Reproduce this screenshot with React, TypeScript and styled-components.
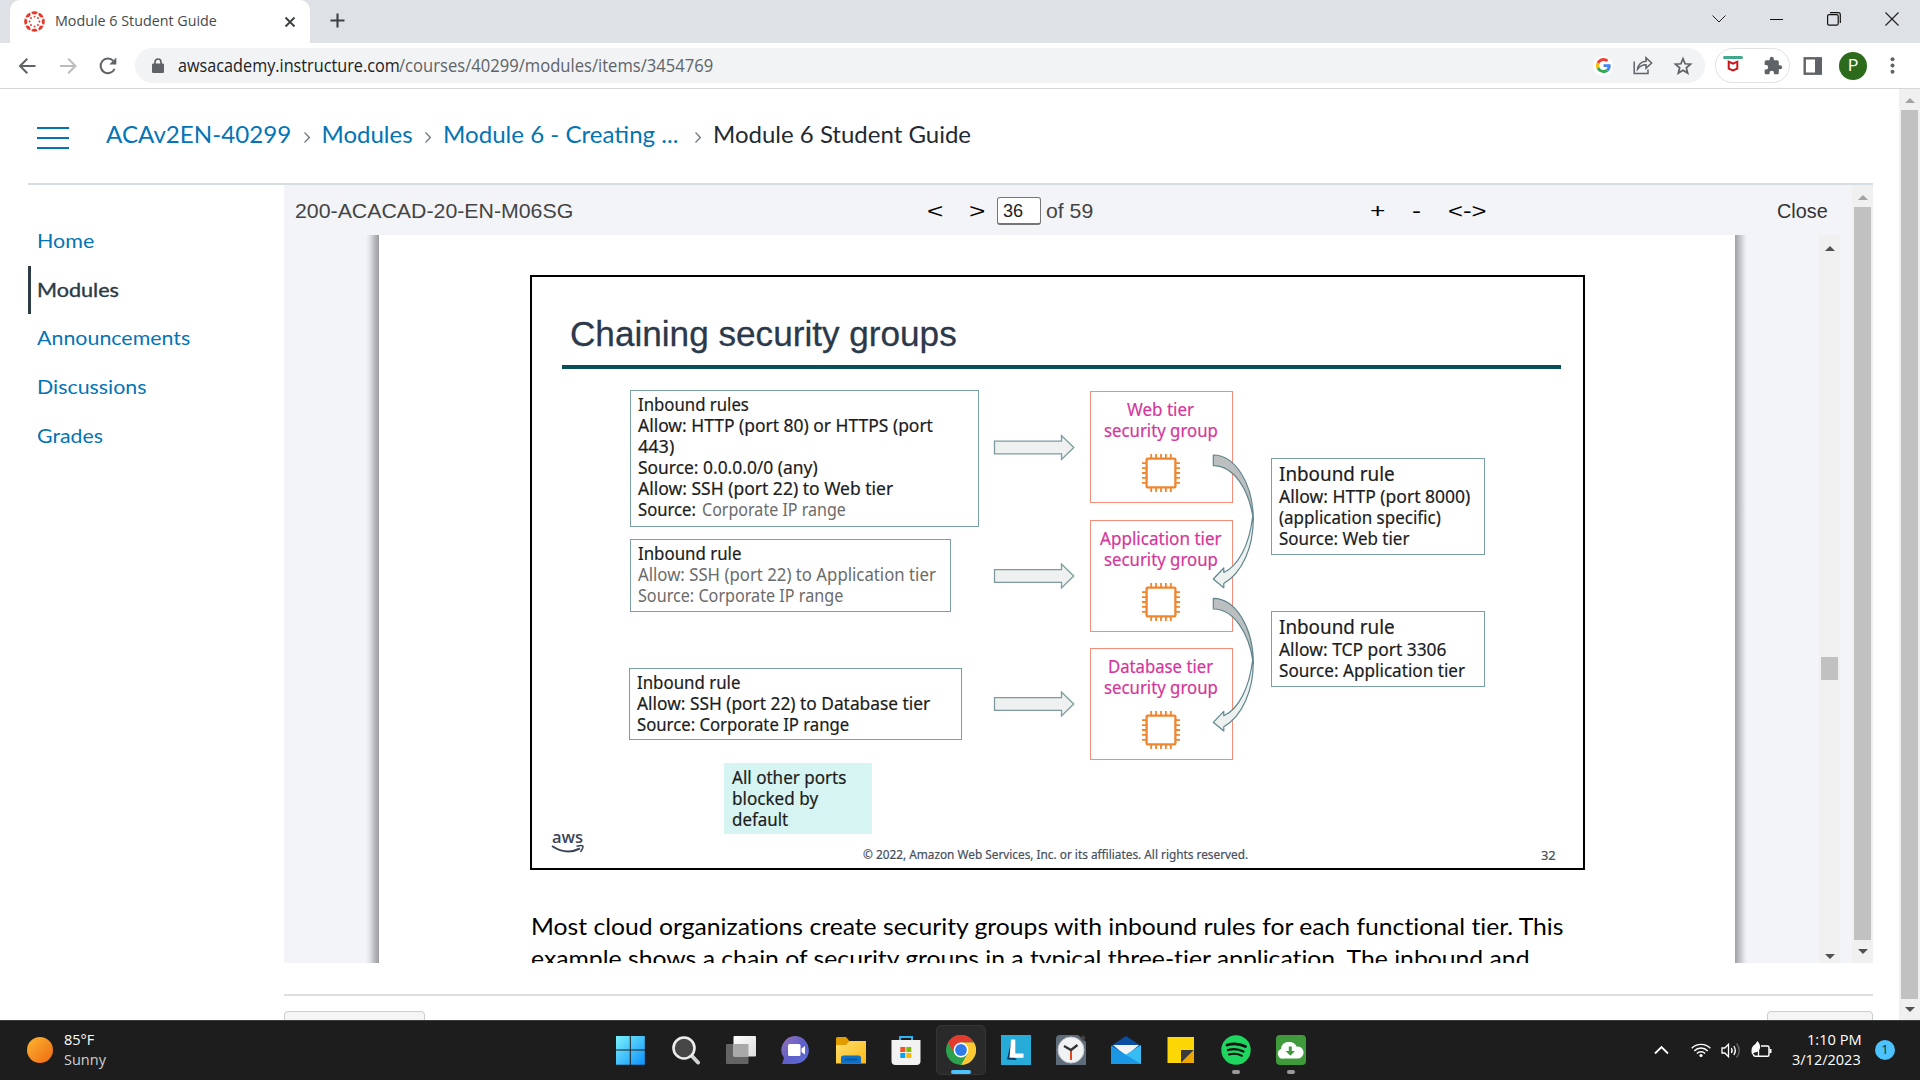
import React, { useLayoutEffect, useRef, useState } from "react";
import styled, { createGlobalStyle } from "styled-components";

const Global = createGlobalStyle`
  * { box-sizing: border-box; }
  html, body { margin: 0; padding: 0; overflow: hidden; background: #fff; }
`;

const ui = `"Open Sans", "Noto Sans", sans-serif`;
const lato = `Lato, "Open Sans", sans-serif`;
const arial = `"Liberation Sans", Arial, sans-serif`;

/* ---------- text fitted to a measured width ---------- */

const FitBox = styled.span<{ $w: number }>`
  display: block;
  flex: none;
  width: ${(p) => p.$w}px;
  white-space: pre;
`;
const FitInner = styled.span`
  display: inline-block;
  transform-origin: 0 50%;
`;

function Fit({ w, children }: { w: number; children: React.ReactNode }) {
  const ref = useRef<HTMLSpanElement>(null);
  const [scale, setScale] = useState(1);
  useLayoutEffect(() => {
    if (ref.current) setScale(w / ref.current.offsetWidth);
  }, [w]);
  return (
    <FitBox $w={w}>
      <FitInner ref={ref} style={{ transform: `scaleX(${scale})` }}>
        {children}
      </FitInner>
    </FitBox>
  );
}

/* ---------- browser frame ---------- */

const Screen = styled.div`
  width: 1920px;
  height: 1080px;
  display: flex;
  flex-direction: column;
  overflow: hidden;
  background: #fff;
  font-family: ${ui};
`;
const TabStrip = styled.div`
  height: 43px;
  flex: none;
  display: flex;
  background: #dee1e6;
  padding-left: 10px;
`;
const Tab = styled.div`
  width: 300px;
  height: 43px;
  padding: 0 14px;
  display: flex;
  align-items: center;
  background: #fff;
  border-radius: 10px 10px 0 0;
  color: #45494d;
  font-size: 15px;
  line-height: 40px;
`;
const TabTitle = styled.div`
  margin-left: 10px;
  flex: 1;
  height: 40px;
  margin-top: -3px;
`;
const NewTab = styled.div`
  display: flex;
  align-items: center;
  padding-left: 20px;
  padding-bottom: 1px;
  flex: 1;
`;
const WindowButtons = styled.div`
  display: flex;
  align-items: center;
  height: 37px;
  gap: 44px;
  padding-right: 21px;
`;
const Toolbar = styled.div`
  height: 46px;
  flex: none;
  display: flex;
  align-items: center;
  border-bottom: 1px solid #d5d7da;
  padding-left: 17px;
`;
const NavButtons = styled.div`
  display: flex;
  align-items: center;
  gap: 20px;
  width: 118px;
`;
const Omnibox = styled.div`
  width: 1570px;
  height: 35px;
  border-radius: 18px;
  background: #f1f3f4;
  display: flex;
  align-items: center;
  padding: 0 12px 0 17px;
  font-size: 17.5px;
  line-height: 33px;
  color: #5f6368;
`;
const Host = styled.div`
  margin-left: 13.5px;
  color: #202124;
`;
const OmniActions = styled.div`
  margin-left: auto;
  display: flex;
  align-items: center;
  gap: 20px;
`;
const GoogleDisc = styled.div`
  width: 20px;
  height: 20px;
  border-radius: 50%;
  background: #fff;
  display: flex;
  align-items: center;
  justify-content: center;
`;
const Extensions = styled.div`
  width: 75px;
  height: 35px;
  margin-left: 10px;
  border: 1px solid #dfe1e3;
  border-radius: 18px;
  display: flex;
  align-items: center;
  justify-content: space-between;
  padding: 0 6px 0 7px;
`;
const ToolIcon = styled.div<{ $ml: number }>`
  display: flex;
  margin-left: ${(p) => p.$ml}px;
`;
const Avatar = styled.div`
  width: 28px;
  height: 28px;
  margin-left: 17px;
  border-radius: 50%;
  background: #2c6a1c;
  color: #fff;
  font: 16px/28px Roboto, sans-serif;
  text-align: center;
`;

/* ---------- page ---------- */

const Page = styled.div`
  height: 931px;
  flex: none;
  display: flex;
`;
const PageBody = styled.div`
  width: 1899px;
  padding: 0 26px 0 28px;
  display: flex;
  flex-direction: column;
`;
const PageHead = styled.div`
  height: 96px;
  flex: none;
  display: flex;
  align-items: center;
  border-bottom: 2px solid #d7dde1;
  padding: 0 0 5px 9px;
  font-family: ${lato};
  font-size: 24px;
  line-height: 36px;
  color: #0374b5;
`;
const Burger = styled.div`
  width: 32px;
  height: 22px;
  margin-right: 37px;
  margin-top: 8px;
  display: flex;
  flex-direction: column;
  justify-content: space-between;
`;
const BurgerLine = styled.span`
  height: 2px;
  background: #0374b5;
`;
const Current = styled.div`
  color: #1f2a33;
`;
const CrumbSep = styled.div<{ $l: number; $r: number }>`
  display: flex;
  margin: 7px ${(p) => p.$r}px 0 ${(p) => p.$l}px;
`;
const Columns = styled.div`
  display: flex;
  flex: 1;
  min-height: 0;
`;
const SideNav = styled.nav`
  width: 256px;
  padding-top: 32px;
  font-family: ${lato};
  font-size: 20px;
  line-height: 47px;
`;
const NavItem = styled.div<{ $active?: boolean }>`
  height: 48.7px;
  padding-left: 5.5px;
  border-left: 3px solid ${(p) => (p.$active ? "#2d3b45" : "transparent")};
  color: ${(p) => (p.$active ? "#2d3b45" : "#0374b5")};
  -webkit-text-stroke: ${(p) => (p.$active ? "0.4px #2d3b45" : "0")};
`;
const Content = styled.div`
  flex: 1;
  display: flex;
  flex-direction: column;
`;
const Viewer = styled.div`
  height: 778px;
  flex: none;
  display: flex;
  background: #f2f4f8;
`;
const ViewerMain = styled.div`
  width: 1568px;
  display: flex;
  flex-direction: column;
`;
const ViewerBar = styled.div`
  height: 50px;
  flex: none;
  display: flex;
  align-items: center;
  padding: 2px 0 0 10.5px;
  font: 21px/48px ${arial};
  color: #444;
`;
const Gap = styled.span<{ $w: number }>`
  width: ${(p) => p.$w}px;
  flex: none;
`;
const Glyph = styled.div<{ $soft?: boolean }>`
  color: ${(p) => (p.$soft ? "#333" : "#000")};
`;
const PageInput = styled.div`
  width: 44px;
  height: 28px;
  padding-left: 5px;
  border: 1px solid #767676;
  border-bottom-width: 2px;
  border-radius: 3px;
  background: #fff;
  color: #222;
  font-size: 19px;
  line-height: 26px;
`;
const DocArea = styled.div`
  flex: 1;
  min-height: 0;
  display: flex;
  overflow: hidden;
`;
const Edge = styled.div<{ $left?: boolean }>`
  width: ${(p) => (p.$left ? 95 : 84)}px;
  flex: none;
  background: ${(p) =>
    p.$left
      ? "linear-gradient(to left, #9b9ca0 0, #b5b6ba 4px, #dfe1e5 9px, #f2f4f8 13px)"
      : "linear-gradient(to right, #a0a1a6 0, #bcbdc2 4px, #e2e4e8 9px, #f2f4f8 12px)"};
`;
const DocPage = styled.div`
  width: 1356px;
  flex: none;
  padding: 40px 0 0 151px;
  background: #fff;
  overflow: hidden;
`;
const Notes = styled.div`
  padding: 40px 0 0 0.5px;
  font: 23px/32px ${lato};
  font-variant-ligatures: none;
  color: #000;
`;
const Footer = styled.div`
  margin-top: 31px;
  border-top: 2px solid #dcdee0;
  padding-top: 15px;
  display: flex;
  justify-content: space-between;
`;
const StubButton = styled.div<{ $w: number }>`
  width: ${(p) => p.$w}px;
  height: 46px;
  border: 1px solid #c7cdd1;
  border-radius: 4px;
  background: #f5f5f5;
`;

/* ---------- scrollbars ---------- */

const Track = styled.div`
  width: 21px;
  flex: none;
  display: flex;
  flex-direction: column;
  align-items: center;
  background: #f0f0f0;
`;
const Thumb = styled.div<{ $h: number }>`
  width: 17px;
  height: ${(p) => p.$h}px;
  background: #c1c1c1;
`;
const Arrow = styled.div<{ $down?: boolean; $c: string; $m: string }>`
  width: 0;
  height: 0;
  margin: ${(p) => p.$m};
  border: 5px solid transparent;
  border-top: ${(p) => (p.$down ? `5px solid ${p.$c}` : "0")};
  border-bottom: ${(p) => (p.$down ? "0" : `5px solid ${p.$c}`)};
`;

/* ---------- slide ---------- */

const Slide = styled.div`
  position: relative;
  width: 1055px;
  height: 595px;
  box-shadow: inset 0 0 0 2px #000;
  font: 17.5px/21px "Noto Sans", sans-serif;
  color: #1c1c1c;
`;
const Node = styled.div<{ $x: number; $y: number; $w?: number; $h?: number }>`
  position: absolute;
  left: ${(p) => p.$x}px;
  top: ${(p) => p.$y}px;
  ${(p) => p.$w && `width: ${p.$w}px;`}
  ${(p) => p.$h && `height: ${p.$h}px;`}
`;
const RuleBox = styled(Node)`
  border: 1.5px solid #79a0a7;
  padding: 3px 0 0 7px;
  -webkit-text-stroke: 0.2px currentColor;
`;
const Note = styled(Node)`
  background: #d6f4f1;
  padding: 4px 0 0 8px;
  -webkit-text-stroke: 0.2px currentColor;
`;
const Group = styled(Node)`
  border: 1.5px solid #f68d78;
  padding: 7px 1px 0 0;
  display: flex;
  flex-direction: column;
  align-items: center;
  color: #d6369a;
  -webkit-text-stroke: 0.2px currentColor;
`;
const ChipSlot = styled.div`
  margin-top: 13px;
  height: 38px;
`;
const Heading = styled.div`
  font-size: 19px;
  line-height: 24px;
`;
const Mixed = styled.div`
  display: flex;
  gap: 6px;
`;
const Soft = styled.div`
  color: #6b6b6b;
  -webkit-text-stroke: 0;
`;
const Title = styled(Node)`
  font: 35.5px/42px ${arial};
  color: #2b394b;
  -webkit-text-stroke: 0.3px #2b394b;
`;
const Rule = styled(Node)`
  background: #084f57;
`;
const Small = styled(Node)`
  font-size: 12px;
  line-height: 16px;
  color: #46505e;
  -webkit-text-stroke: 0.2px #46505e;
`;
const AwsWord = styled(Node)`
  font: 600 16px/18px "Open Sans", sans-serif;
  color: #3a4657;
`;
const Overlay = styled.svg`
  position: absolute;
  left: 0;
  top: 0;
`;

const pins = [0, 1, 2, 3, 4];
const Chip = () => (
  <svg width="38" height="38" viewBox="0 0 38 38" fill="none" stroke="#f0852f">
    <rect x="4.6" y="4.6" width="28.8" height="28.8" rx="1" strokeWidth="2.3" />
    {pins.map((i) => {
      const p = 9.2 + i * 4.9;
      return (
        <path key={i} strokeWidth="1.8" d={`M${p} 0V4M${p} 34V38M0 ${p}H4M34 ${p}H38`} />
      );
    })}
  </svg>
);

const BlockArrow = ({ y }: { y: number }) => (
  <path
    transform={`translate(464.5 ${y})`}
    d="M0 -6.3H67V-12L79.3 0L67 12V6.3H0Z"
    fill="#eef1f0"
    stroke="#7d9a9f"
    strokeWidth="1.3"
  />
);

const CurvedArrow = ({ y }: { y: number }) => (
  <g transform={`translate(683.3 ${y})`} stroke="#5f868d" strokeWidth="1.2" strokeLinejoin="round">
    <path
      d="M40 64C40 92 29 118 10.5 128.5V132.7L0 124L10.5 113V117.5C25 111 36 90 39.3 62Z"
      fill="#edf1f0"
    />
    <path d="M0 0C22 0 40 29 40 65C36 34 20 10.7 0 10.7Z" fill="#bcbfbf" />
  </g>
);

function SlideView() {
  return (
    <Slide>
      <Title $x={40} $y={38}><Fit w={387}>Chaining security groups</Fit></Title>
      <Rule $x={32} $y={90} $w={999} $h={4} />
      <RuleBox $x={100} $y={115} $w={348.5} $h={136.5}>
        <Fit w={111}>Inbound rules</Fit>
        <Fit w={295}>Allow: HTTP (port 80) or HTTPS (port</Fit>
        <Fit w={36}>443)</Fit>
        <Fit w={180}>Source: 0.0.0.0/0 (any)</Fit>
        <Fit w={255}>Allow: SSH (port 22) to Web tier</Fit>
        <Mixed>
          <Fit w={58}>Source:</Fit>
          <Soft><Fit w={144}>Corporate IP range</Fit></Soft>
        </Mixed>
      </RuleBox>
      <RuleBox $x={100} $y={264} $w={320.5} $h={73}>
        <Fit w={103}>Inbound rule</Fit>
        <Soft>
          <Fit w={298}>Allow: SSH (port 22) to Application tier</Fit>
          <Fit w={205}>Source: Corporate IP range</Fit>
        </Soft>
      </RuleBox>
      <RuleBox $x={99} $y={392.5} $w={333} $h={72.5}>
        <Fit w={103}>Inbound rule</Fit>
        <Fit w={293}>Allow: SSH (port 22) to Database tier</Fit>
        <Fit w={212}>Source: Corporate IP range</Fit>
      </RuleBox>
      <Note $x={194} $y={487.5} $w={148} $h={71.5}>
        <Fit w={114}>All other ports</Fit>
        <Fit w={86}>blocked by</Fit>
        <Fit w={56}>default</Fit>
      </Note>
      <Group $x={559.5} $y={116} $w={143} $h={112}>
        <Fit w={67}>Web tier</Fit>
        <Fit w={114}>security group</Fit>
        <ChipSlot><Chip /></ChipSlot>
      </Group>
      <Group $x={559.5} $y={244.5} $w={143} $h={112}>
        <Fit w={122}>Application tier</Fit>
        <Fit w={114}>security group</Fit>
        <ChipSlot><Chip /></ChipSlot>
      </Group>
      <Group $x={559.5} $y={373} $w={143} $h={112}>
        <Fit w={105}>Database tier</Fit>
        <Fit w={114}>security group</Fit>
        <ChipSlot><Chip /></ChipSlot>
      </Group>
      <RuleBox $x={741} $y={183} $w={213.5} $h={97}>
        <Heading><Fit w={116}>Inbound rule</Fit></Heading>
        <Fit w={191}>Allow: HTTP (port 8000)</Fit>
        <Fit w={162}>(application specific)</Fit>
        <Fit w={130}>Source: Web tier</Fit>
      </RuleBox>
      <RuleBox $x={741} $y={336} $w={213.5} $h={76}>
        <Heading><Fit w={116}>Inbound rule</Fit></Heading>
        <Fit w={168}>Allow: TCP port 3306</Fit>
        <Fit w={186}>Source: Application tier</Fit>
      </RuleBox>
      <Small $x={333} $y={571.5}>
        <Fit w={385}>© 2022, Amazon Web Services, Inc. or its affiliates. All rights reserved.</Fit>
      </Small>
      <Small $x={1010.500} $y={572.5}><Fit w={15}>32</Fit></Small>
      <AwsWord $x={21.5} $y={553}><Fit w={31}>aws</Fit></AwsWord>
      <Overlay width="1055" height="595" viewBox="0 0 1055 595">
        <BlockArrow y={172.5} />
        <BlockArrow y={301} />
        <BlockArrow y={429} />
        <CurvedArrow y={180} />
        <CurvedArrow y={323.3} />
        <path d="M22 571Q36 580.5 50 573.5" fill="none" stroke="#3a4657" strokeWidth="2" />
        <path d="M46.5 571.3Q53 569.5 53 571.5T50.5 577" fill="none" stroke="#3a4657" strokeWidth="1.6" />
      </Overlay>
    </Slide>
  );
}

/* ---------- taskbar ---------- */

const Taskbar = styled.div`
  height: 60px;
  flex: none;
  display: flex;
  align-items: center;
  background: #1d1d1d;
  border-top: 1px solid #3c3e3e;
  padding-bottom: 1px;
  color: #fff;
  font-size: 14.5px;
  line-height: 20px;
`;
const Sun = styled.div`
  width: 26px;
  height: 26px;
  margin: 0 11px 0 27px;
  border-radius: 50%;
  background: linear-gradient(135deg, #fdb52f, #ee6a14);
`;
const Weather = styled.div`
  width: 541px;
  padding-bottom: 1px;
`;
const Muted = styled.div`
  color: #cfcfcf;
`;
const Apps = styled.div`
  display: flex;
  gap: 5px;
  width: 710px;
  padding-left: 1px;
`;
const AppCell = styled.div<{ $active?: boolean }>`
  width: 50px;
  height: 50px;
  flex: none;
  display: flex;
  flex-direction: column;
  align-items: center;
  padding-top: ${(p) => (p.$active ? 9 : 10)}px;
  border-radius: 5px;
  border: ${(p) => (p.$active ? "1px solid #353535" : "0")};
  background: ${(p) => (p.$active ? "#2a2a2a" : "transparent")};
`;
const Pip = styled.div<{ $on?: boolean }>`
  width: ${(p) => (p.$on ? 20 : 8)}px;
  height: 4px;
  margin-top: 5px;
  border-radius: 2px;
  background: ${(p) => (p.$on ? "#4cc2ff" : "#9a9a9a")};
`;
const Tray = styled.div`
  display: flex;
  align-items: center;
  margin-left: auto;
`;
const TraySlot = styled.div<{ $mr: number }>`
  display: flex;
  margin-right: ${(p) => p.$mr}px;
`;
const Clock = styled.div`
  display: flex;
  flex-direction: column;
  align-items: flex-end;
  margin-right: 14px;
  padding-bottom: 1px;
`;
const Badge = styled.div`
  width: 20px;
  height: 20px;
  margin-right: 25px;
  border-radius: 50%;
  background: #4cc2ff;
  color: #10222c;
  font-size: 12px;
  line-height: 20px;
  text-align: center;
`;

const Svg30 = ({ children }: { children: React.ReactNode }) => (
  <svg width="30" height="30" viewBox="0 0 30 30">{children}</svg>
);

const icons: Record<string, React.ReactNode> = {
  windows: (
    <Svg30>
      <defs>
        <linearGradient id="win" x1="0" y1="0" x2="30" y2="30" gradientUnits="userSpaceOnUse">
          <stop offset="0" stopColor="#7df3fc" /><stop offset="1" stopColor="#0a8ffb" />
        </linearGradient>
      </defs>
      <path fill="url(#win)" d="M0 1H13.800V14.600H0zM14.800 1H28.800V14.600H14.800zM0 15.600H13.800V29.800H0zM14.800 15.600H28.800V29.800H14.800z" />
    </Svg30>
  ),
  search: (
    <Svg30>
      <path d="M20 20L27 27.5" stroke="#cfd3d6" strokeWidth="4" strokeLinecap="round" />
      <circle cx="13" cy="13" r="10.5" fill="#464646" stroke="#eceeee" strokeWidth="2.6" />
    </Svg30>
  ),
  tasks: (
    <Svg30>
      <defs>
        <linearGradient id="tv" x1="0" y1="0" x2="1" y2="1">
          <stop offset="0" stopColor="#fff" /><stop offset="1" stopColor="#dcdcdc" />
        </linearGradient>
      </defs>
      <rect x="0" y="9" width="22.500" height="20" rx="1" fill="#636363" />
      <rect x="7.500" y="1" width="22.500" height="20.500" rx="1" fill="url(#tv)" />
      <rect x="7.500" y="9" width="15" height="12.500" fill="#a9a9a9" />
    </Svg30>
  ),
  chat: (
    <Svg30>
      <defs>
        <linearGradient id="ch" x1="0" y1="0" x2="1" y2="1">
          <stop offset="0" stopColor="#9b74b8" /><stop offset=".5" stopColor="#5f5fc9" /><stop offset="1" stopColor="#5a6fd8" />
        </linearGradient>
      </defs>
      <path fill="url(#ch)" d="M15 1a14.300 14 0 1 1-3 28H1L3 23A14.300 14 0 0 1 15 1Z" />
      <rect x="7" y="9" width="12.500" height="12" rx="1.500" fill="#fff" />
      <path d="M20.500 13.500L24 11V19.500L20.500 17Z" fill="#fff" />
    </Svg30>
  ),
  folder: (
    <Svg30>
      <defs>
        <linearGradient id="fo" x1="0" y1="0" x2="1" y2="1">
          <stop offset="0" stopColor="#ffdf70" /><stop offset="1" stopColor="#fbb912" />
        </linearGradient>
      </defs>
      <path fill="#e19d00" d="M0 3.500a1.500 1.500 0 0 1 1.500-1.500H10l3 3.500V12H0z" />
      <path fill="url(#fo)" d="M0 10H10L13.500 6H30V28.500H0z" />
      <path fill="#0e6fc4" d="M5 28.500V23a2.500 2.500 0 0 1 2.500-2.500H22.500A2.500 2.500 0 0 1 25 23V28.500z" />
      <path d="M9 24.500H21" stroke="#0a4c8d" strokeWidth="1.300" />
    </Svg30>
  ),
  store: (
    <Svg30>
      <path d="M9 6V2H21V6" fill="none" stroke="#2fb2f2" strokeWidth="2" />
      <path fill="#f2f2f2" d="M.500 5H29.500V26a4 4 0 0 1-4 4H4.500a4 4 0 0 1-4-4z" />
      <path fill="#f25022" d="M9.300 12h5v5h-5z" /><path fill="#7fba00" d="M15.300 12h5v5h-5z" />
      <path fill="#00a4ef" d="M9.300 18h5v5h-5z" /><path fill="#ffb900" d="M15.300 18h5v5h-5z" />
    </Svg30>
  ),
  chrome: (
    <Svg30>
      <circle cx="15" cy="15" r="15" fill="#2da24c" />
      <path fill="#e33b2e" d="M2 7.500A15 15 0 0 1 28 7.500H15L8.500 18.750Z" />
      <path fill="#fcc934" d="M28 7.500A15 15 0 0 1 15 30L21.500 18.750 15 7.500Z" />
      <circle cx="15" cy="15" r="7.400" fill="#fff" />
      <circle cx="15" cy="15" r="5.900" fill="#2f7bea" />
    </Svg30>
  ),
  l: (
    <Svg30>
      <path fill="#27abd9" d="M0 0H30V30H0z" />
      <path fill="#0b3a63" d="M10.500 5L6 24.500L16 25 12 21z" />
      <path fill="#fff" d="M10 4.500H14.300V18.500H22.500V22.700H8.500z" />
    </Svg30>
  ),
  clock: (
    <Svg30>
      <path fill="#5f6c79" d="M4 0H22L30 7V30H0V4a4 4 0 0 1 4-4z" />
      <path fill="#454545" d="M24 3L27 0 29.500 3 27 6z" />
      <circle cx="15" cy="15" r="13" fill="#f1f2f3" stroke="#c6cacf" />
      <path d="M15 15V25" stroke="#e2481b" strokeWidth="2" />
      <path d="M8 11L15 15L21.500 10" fill="none" stroke="#333" strokeWidth="2.300" />
    </Svg30>
  ),
  mail: (
    <Svg30>
      <path fill="#0a4ea2" d="M0 11L15 1 30 11V16H0z" />
      <path fill="#f1f3f5" d="M2 10H28L15 21z" />
      <path fill="#37bdf4" d="M30 10V29H0z" />
      <path fill="#1b98e5" d="M0 10.500L30 29H0z" />
    </Svg30>
  ),
  note: (
    <Svg30>
      <path fill="#fdd606" d="M1.500 2H28V28H1.500z" />
      <path fill="#3a3a3a" d="M15 15H28L15 28z" />
      <path fill="#eda800" d="M28 15V28H15z" />
    </Svg30>
  ),
  spotify: (
    <Svg30>
      <circle cx="15" cy="15" r="14.700" fill="#1fd760" />
      <g fill="none" stroke="#111" strokeLinecap="round">
        <path d="M6 10Q15.500 7 24.500 11.500" strokeWidth="2.800" />
        <path d="M7 15Q15 12.500 22.500 16.500" strokeWidth="2.300" />
        <path d="M8 19.500Q15 17.500 21 20.800" strokeWidth="2" />
      </g>
    </Svg30>
  ),
  cloud: (
    <Svg30>
      <rect width="30" height="30" rx="4" fill="#3f9a3c" />
      <path fill="#fff" d="M8 23.500A5 5 0 0 1 5 14 7 7 0 0 1 12.500 7Q18.500 6.500 20.500 11.500A6 6 0 0 1 22.500 23.500z" />
      <path fill="#3f9a3c" d="M12.800 11.500H15.800V16H19L14.300 20.800 9.600 16H12.800z" />
    </Svg30>
  ),
};

const apps: { id: string; pip?: "on" | "idle" }[] = [
  { id: "windows" }, { id: "search" }, { id: "tasks" }, { id: "chat" }, { id: "folder" },
  { id: "store" }, { id: "chrome", pip: "on" }, { id: "l" }, { id: "clock" }, { id: "mail" },
  { id: "note" }, { id: "spotify", pip: "idle" }, { id: "cloud", pip: "idle" },
];

const Sep = ({ l, r }: { l: number; r: number }) => (
  <CrumbSep $l={l} $r={r}>
    <svg width="6" height="11" viewBox="0 0 6 11" fill="none" stroke="#6b7780" strokeWidth="1.2">
      <path d="M.5 .5L5.300 5.500.5 10.500" />
    </svg>
  </CrumbSep>
);

const spokes = [0, 45, 90, 135, 180, 225, 270, 315];

export default function App() {
  return (
    <Screen>
      <Global />
      <TabStrip>
        <Tab>
          <svg width="21" height="21" viewBox="-10.500 -10.500 21 21">
            {spokes.map((a) => (
              <g key={a} transform={`rotate(${a})`} fill="#e5392c">
                <path d="M-3.300 -9.600Q0 -11 3.300 -9.600A3.400 3.400 0 0 1 -3.300 -9.600Z" />
                <circle cx="0" cy="-4.900" r=".95" />
              </g>
            ))}
          </svg>
          <TabTitle><Fit w={162}>Module 6 Student Guide</Fit></TabTitle>
          <svg width="12" height="12" viewBox="0 0 12 12" stroke="#3c4043" strokeWidth="1.900">
            <path d="M1.500 1.500L10.500 10.500M10.500 1.500L1.500 10.500" />
          </svg>
        </Tab>
        <NewTab>
          <svg width="16" height="16" viewBox="0 0 16 16" stroke="#3c4043" strokeWidth="2.100">
            <path d="M7.500 .5V14.500M.5 7.500H14.500" />
          </svg>
        </NewTab>
        <WindowButtons>
          <svg width="14" height="14" viewBox="0 0 14 14" fill="none" stroke="#222"><path d="M.5 3.500L7 10 13.500 3.500" /></svg>
          <svg width="13" height="14" viewBox="0 0 13 14" stroke="#111"><path d="M0 7.500H13" /></svg>
          <svg width="14" height="14" viewBox="0 0 14 14" fill="none" stroke="#111" strokeWidth="1.200">
            <rect x=".6" y="2.600" width="10.600" height="10.600" rx="1.500" />
            <path d="M3 .7H11.300A2 2 0 0 1 13.300 2.700V11" />
          </svg>
          <svg width="14" height="14" viewBox="0 0 14 14" stroke="#222" strokeWidth="1.200"><path d="M.5 .5L13.500 13.500M13.500 .5L.5 13.500" /></svg>
        </WindowButtons>
      </TabStrip>
      <Toolbar>
        <NavButtons>
          <svg width="20" height="20" viewBox="0 0 20 20" fill="none" stroke="#5f6368" strokeWidth="2"><path d="M18.500 10H3M10.300 2.700L3 10 10.300 17.300" /></svg>
          <svg width="20" height="20" viewBox="0 0 20 20" fill="none" stroke="#babcbe" strokeWidth="2"><path d="M3 10H18.500M11.200 2.700L18.500 10 11.200 17.300" /></svg>
          <svg width="20" height="20" viewBox="0 0 20 20" fill="none" stroke="#5f6368" strokeWidth="2"><path d="M17.600 12.800A7.300 7.300 0 1 1 16.300 4.900" /><path d="M19.300 1.500V8.500H12.300z" fill="#5f6368" stroke="none" /></svg>
        </NavButtons>
        <Omnibox>
          <svg width="12" height="15" viewBox="0 0 12 15"><rect y="5.500" width="12" height="9.500" rx="1.200" fill="#5f6368" /><path d="M3 6V4A3 3 0 0 1 9 4V6" fill="none" stroke="#5f6368" strokeWidth="1.700" /></svg>
          <Host><Fit w={221.5}>awsacademy.instructure.com</Fit></Host>
          <Fit w={314}>/courses/40299/modules/items/3454769</Fit>
          <OmniActions>
            <GoogleDisc>
              <svg width="15" height="15" viewBox="0 0 48 48">
                <path fill="#ea4335" d="M24 9.500c3.540 0 6.710 1.220 9.210 3.600l6.850-6.850C35.900 2.380 30.470 0 24 0 14.620 0 6.510 5.380 2.560 13.220l7.980 6.190C12.430 13.720 17.740 9.500 24 9.500z" />
                <path fill="#4285f4" d="M46.980 24.550c0-1.570-.15-3.090-.38-4.550H24v9.020h12.940c-.58 2.960-2.260 5.480-4.780 7.180l7.730 6c4.510-4.180 7.090-10.360 7.090-17.650z" />
                <path fill="#fbbc05" d="M10.530 28.590A14.500 14.500 0 0 1 10.530 19.410l-7.980-6.190a24 24 0 0 0 0 21.560z" />
                <path fill="#34a853" d="M24 48c6.480 0 11.930-2.130 15.890-5.810l-7.730-6c-2.150 1.450-4.920 2.300-8.160 2.300-6.260 0-11.570-4.220-13.470-9.910l-7.980 6.190C6.510 42.620 14.620 48 24 48z" />
              </svg>
            </GoogleDisc>
            <svg width="20" height="19" viewBox="0 0 20 19" fill="none" stroke="#5f6368" strokeWidth="1.500"><path d="M1.200 5.500V17.500H15V13.500M4.500 13.200C5 8.500 8.500 5.300 13 5.200V1.800L18.600 7 13 12.200V8.800C9.500 8.800 7 10 4.500 13.200Z" /></svg>
            <svg width="20" height="20" viewBox="0 0 24 24" fill="none" stroke="#5f6368" strokeWidth="2.100"><path d="M12 3.300L14.500 9.300 21 9.800 16 14.100 17.600 20.500 12 17.100 6.400 20.500 8 14.100 3 9.800 9.500 9.300Z" /></svg>
          </OmniActions>
        </Omnibox>
        <Extensions>
          <svg width="20" height="22" viewBox="0 0 20 22"><rect y="1" width="20" height="3" rx="1.500" fill="#3faa8b" /><path d="M5.700 6.700L10 8.700 14.300 6.700V13.700L10 15.500 5.700 13.700Z" fill="none" stroke="#c8141b" strokeWidth="2" /></svg>
          <svg width="20" height="20" viewBox="0 0 24 24" fill="#5f6368"><path d="M20.500 11H19V7c0-1.100-.9-2-2-2h-4V3.500a2.500 2.500 0 0 0-5 0V5H4c-1.100 0-2 .9-2 2v3.800h1.500a2.700 2.700 0 0 1 0 5.400H2V20c0 1.100.9 2 2 2h3.800v-1.500a2.700 2.700 0 0 1 5.400 0V22H17c1.100 0 2-.9 2-2v-4h1.500a2.500 2.500 0 0 0 0-5z" /></svg>
        </Extensions>
        <ToolIcon $ml={13}>
          <svg width="19" height="18" viewBox="0 0 19 18"><rect x="1.700" y="1.300" width="16.200" height="15.400" fill="#fff" stroke="#5f6368" strokeWidth="2.400" /><path d="M12 1H18V17H12z" fill="#5f6368" /></svg>
        </ToolIcon>
        <Avatar>P</Avatar>
        <ToolIcon $ml={23}>
          <svg width="5" height="17" viewBox="0 0 5 17" fill="#5f6368"><circle cx="2.500" cy="2.300" r="2" /><circle cx="2.500" cy="8.500" r="2" /><circle cx="2.500" cy="14.700" r="2" /></svg>
        </ToolIcon>
      </Toolbar>

      <Page>
        <PageBody>
          <PageHead>
            <Burger><BurgerLine /><BurgerLine /><BurgerLine /></Burger>
            <Fit w={185}>ACAv2EN-40299</Fit>
            <Sep l={12.5} r={12} />
            <Fit w={91}>Modules</Fit>
            <Sep l={12.5} r={12} />
            <Fit w={235}>Module 6 - Creating ...</Fit>
            <Sep l={17} r={12} />
            <Current><Fit w={258}>Module 6 Student Guide</Fit></Current>
          </PageHead>
          <Columns>
            <SideNav>
              <NavItem><Fit w={57}>Home</Fit></NavItem>
              <NavItem $active><Fit w={82}>Modules</Fit></NavItem>
              <NavItem><Fit w={153}>Announcements</Fit></NavItem>
              <NavItem><Fit w={109}>Discussions</Fit></NavItem>
              <NavItem><Fit w={66}>Grades</Fit></NavItem>
            </SideNav>
            <Content>
              <Viewer>
                <ViewerMain>
                  <ViewerBar>
                    <Fit w={278}>200-ACACAD-20-EN-M06SG</Fit>
                    <Gap $w={354.5} />
                    <Glyph><Fit w={16}>&lt;</Fit></Glyph>
                    <Gap $w={26} />
                    <Glyph><Fit w={16}>&gt;</Fit></Glyph>
                    <Gap $w={11.5} />
                    <PageInput><Fit w={20}>36</Fit></PageInput>
                    <Gap $w={5} />
                    <Fit w={47.5}>of 59</Fit>
                    <Gap $w={276.5} />
                    <Glyph><Fit w={15}>+</Fit></Glyph>
                    <Gap $w={27} />
                    <Glyph><Fit w={9}>-</Fit></Glyph>
                    <Gap $w={27.5} />
                    <Glyph><Fit w={39}>&lt;-&gt;</Fit></Glyph>
                    <Gap $w={289.5} />
                    <Glyph $soft><Fit w={51}>Close</Fit></Glyph>
                  </ViewerBar>
                  <DocArea>
                    <Edge $left />
                    <DocPage>
                      <SlideView />
                      <Notes>
                        <Fit w={1032}>Most cloud organizations create security groups with inbound rules for each functional tier. This</Fit>
                        <Fit w={999}>example shows a chain of security groups in a typical three-tier application. The inbound and</Fit>
                      </Notes>
                    </DocPage>
                    <Edge />
                    <Track>
                      <Arrow $c="#505050" $m="11px 0 406px" />
                      <Thumb $h={23} />
                      <Arrow $down $c="#505050" $m="274px 0 0" />
                    </Track>
                  </DocArea>
                </ViewerMain>
                <Track>
                  <Arrow $c="#a3a3a3" $m="10px 0 7px" />
                  <Thumb $h={733} />
                  <Arrow $down $c="#505050" $m="9px 0 0" />
                </Track>
              </Viewer>
              <Footer>
                <StubButton $w={141} />
                <StubButton $w={106} />
              </Footer>
            </Content>
          </Columns>
        </PageBody>
        <Track>
          <Arrow $c="#a3a3a3" $m="9px 0 7px" />
          <Thumb $h={889} />
          <Arrow $down $c="#505050" $m="8px 0 0" />
        </Track>
      </Page>

      <Taskbar>
        <Sun />
        <Weather>
          <Fit w={30}>85°F</Fit>
          <Muted><Fit w={42}>Sunny</Fit></Muted>
        </Weather>
        <Apps>
          {apps.map((a) => (
            <AppCell key={a.id} $active={a.pip === "on"}>
              {icons[a.id]}
              {a.pip && <Pip $on={a.pip === "on"} />}
            </AppCell>
          ))}
        </Apps>
        <Tray>
          <TraySlot $mr={22}>
            <svg width="16" height="10" viewBox="0 0 16 10" fill="none" stroke="#fff" strokeWidth="1.800"><path d="M2 8.500L8.500 2 15 8.500" /></svg>
          </TraySlot>
          <TraySlot $mr={10}>
            <svg width="20" height="16" viewBox="0 0 20 16" fill="none" stroke="#fff" strokeWidth="1.400">
              <path d="M.7 6.300A13 13 0 0 1 19.300 6.300M3.300 8.900A9.300 9.300 0 0 1 16.700 8.900M5.900 11.400A5.800 5.800 0 0 1 14.100 11.400" />
              <circle cx="10" cy="13.500" r="1.600" fill="#fff" stroke="none" />
            </svg>
          </TraySlot>
          <TraySlot $mr={10}>
            <svg width="20" height="17" viewBox="0 0 20 17" fill="none" stroke="#fff" strokeWidth="1.300">
              <path d="M1 6H3.800L7.500 2.300V14.700L3.800 11H1Z" />
              <path d="M10.300 6Q12 8.500 10.300 11M12.800 4Q15.800 8.500 12.800 13" />
              <path d="M15.500 1.500Q21 8.500 15.500 15.500" stroke="#666" />
            </svg>
          </TraySlot>
          <TraySlot $mr={20}>
            <svg width="21" height="18" viewBox="0 0 21 18">
              <path d="M10 5H16.500Q18 5 18 6.500V13.500Q18 15.300 16.500 15.300H4.500Q2.500 15.300 2.300 13" fill="none" stroke="#fff" strokeWidth="1.500" />
              <path d="M18.500 8H20.500V12H18.500z" fill="#fff" />
              <path d="M6.500 0Q10.500 4.500 8.500 8.500 7 11.500 3.500 11.500L1 13.500Q-.5 8 2 5 4.500 3.500 6.500 0Z" fill="#fff" />
              <path d="M7.500 9V15" stroke="#fff" strokeWidth="1.300" />
            </svg>
          </TraySlot>
          <Clock>
            <Fit w={54.5}>1:10 PM</Fit>
            <Fit w={69}>3/12/2023</Fit>
          </Clock>
          <Badge>1</Badge>
        </Tray>
      </Taskbar>
    </Screen>
  );
}
